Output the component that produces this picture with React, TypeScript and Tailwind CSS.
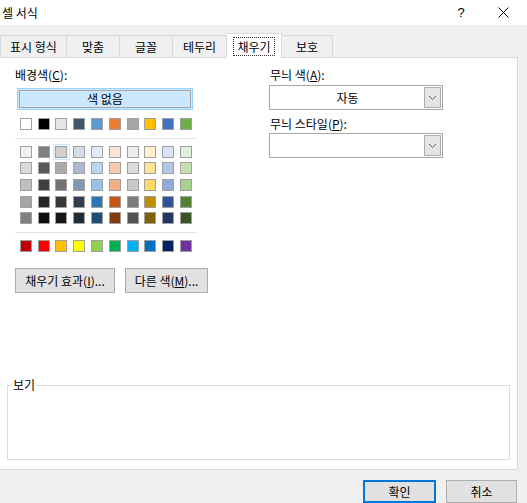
import React from "react";

const themeTop = ["#FFFFFF", "#000000", "#E7E6E6", "#44546A", "#5B9BD5", "#ED7D31", "#A5A5A5", "#FFC000", "#4472C4", "#70AD47"];
const themeRows = [
  ["#F2F2F2", "#7F7F7F", "#D0CECE", "#D6DCE5", "#DDEBF7", "#FCE4D6", "#EDEDED", "#FFF2CC", "#D9E1F2", "#E2EFDA"],
  ["#D9D9D9", "#595959", "#AEAAAA", "#ACB9CA", "#BDD7EE", "#F8CBAD", "#DBDBDB", "#FFE699", "#B4C6E7", "#C6E0B4"],
  ["#BFBFBF", "#404040", "#757171", "#8497B0", "#9BC2E6", "#F4B084", "#C9C9C9", "#FFD966", "#8EA9DB", "#A9D08E"],
  ["#A6A6A6", "#262626", "#3A3838", "#333F4F", "#2F75B5", "#C65911", "#7B7B7B", "#BF8F00", "#305496", "#548235"],
  ["#808080", "#0D0D0D", "#161616", "#222B35", "#1F4E78", "#833C0C", "#525252", "#806000", "#203764", "#375623"],
];
const standard = ["#C00000", "#FF0000", "#FFC000", "#FFFF00", "#92D050", "#00B050", "#00B0F0", "#0070C0", "#002060", "#7030A0"];

function SwatchRow({ colors, selected = -1 }: { colors: string[]; selected?: number }) {
  return (
    <div className="flex">
      {colors.map((c, i) => (
        <div
          key={i}
          className={
            "w-[17.8px] h-[16.6px] flex items-center justify-center border " +
            (i === selected ? "border-[#cce8ff] bg-[#eef7ff]" : "border-transparent")
          }
        >
          <div className="w-[12px] h-[12px] border border-[#a0a0a0]" style={{ backgroundColor: c }} />
        </div>
      ))}
    </div>
  );
}

function Chevron() {
  return (
    <svg width="9" height="6" viewBox="0 0 9 6">
      <path d="M1 1 L4.5 4.5 L8 1" fill="none" stroke="#606060" strokeWidth="1" />
    </svg>
  );
}

function Dropdown({ value }: { value?: string }) {
  return (
    <div className="w-[174px] h-[25px] border border-[#a6a6a6] bg-white flex p-[1px]">
      <div className="flex-1 flex items-center justify-center leading-[16px]">{value}</div>
      <div className="w-[17px] border border-[#adadad] bg-[#e5e5e5] flex items-center justify-center">
        <Chevron />
      </div>
    </div>
  );
}

export default function App() {
  const tabs = [
    { label: "표시 형식", w: "w-[67px]" },
    { label: "맞춤", w: "w-[53px]" },
    { label: "글꼴", w: "w-[53px]" },
    { label: "테두리", w: "w-[54px]" },
  ];
  return (
    <div className="w-[527px] h-[503px] bg-[#f0f0f0] overflow-hidden text-[12px] text-black font-['Noto_Sans_CJK_KR','Liberation_Sans',sans-serif] leading-[16px]">
      {/* Title bar */}
      <div className="h-[25px] bg-white flex items-center">
        <div className="pl-[2px] flex-1">셀 서식</div>
        <div className="w-[20px] text-center mr-[22px] font-['Liberation_Sans',sans-serif] text-[13px]">?</div>
        <div className="w-[20px] mr-[14px] flex justify-center">
          <svg width="11" height="11" viewBox="0 0 11 11">
            <path d="M0.5 0.5 L10.5 10.5 M10.5 0.5 L0.5 10.5" stroke="#000" strokeWidth="1" />
          </svg>
        </div>
      </div>

      {/* Tabs */}
      <div className="mt-[8px] h-[24px] flex items-end relative z-10">
        {tabs.map((t, i) => (
          <div
            key={t.label}
            className={
              t.w +
              " h-[22px] border-t border-r border-[#d9d9d9] bg-[#f0f0f0] flex items-center justify-center " +
              (i === 0 ? "border-l" : "")
            }
          >
            {t.label}
          </div>
        ))}
        <div className="w-[55px] h-[25px] mb-[-1px] bg-white border-t border-r border-[#d9d9d9] flex items-start justify-center pt-[3px]">
          <div className="border border-dotted border-[#303030] px-[3px] h-[19px] flex items-center">채우기</div>
        </div>
        <div className="w-[51px] h-[22px] border-t border-r border-[#d9d9d9] bg-[#f0f0f0] flex items-center justify-center">
          보호
        </div>
      </div>

      {/* Panel */}
      <div className="w-[518px] h-[413px] bg-white border-t border-r border-b border-[#d9d9d9]">
        <div className="flex">
          {/* Left column */}
          <div className="ml-[15px] w-[184px] shrink-0">
            <div className="mt-[9px] h-[16px]">
              배경색(<span className="underline">C</span>):
            </div>
            <div className="mt-[5px] ml-[2px] w-[176px] h-[22px] border border-[#99d1ff] bg-[#cce8ff] p-[1px]">
              <div className="w-full h-full border border-[#a6a6a6] flex items-center justify-center">색 없음</div>
            </div>
            <div className="mt-[6px] ml-[2px]">
              <SwatchRow colors={themeTop} />
            </div>
            <div className="mt-[5px] w-[182px] h-px bg-[#e3e3e3]" />
            <div className="mt-[5px] ml-[2px]">
              {themeRows.map((r, i) => (
                <SwatchRow key={i} colors={r} selected={i === 0 ? 2 : -1} />
              ))}
            </div>
            <div className="mt-[5px] w-[182px] h-px bg-[#e3e3e3]" />
            <div className="mt-[5px] ml-[2px]">
              <SwatchRow colors={standard} />
            </div>
            <div className="mt-[14px] flex gap-[10px] w-[200px]">
              <div className="w-[100px] h-[25px] shrink-0 border border-[#adadad] bg-[#e1e1e1] flex items-center justify-center">
                채우기 효과(<span className="underline">I</span>)...
              </div>
              <div className="w-[83px] h-[25px] shrink-0 border border-[#adadad] bg-[#e1e1e1] flex items-center justify-center">
                다른 색(<span className="underline">M</span>)...
              </div>
            </div>
          </div>

          {/* Right column */}
          <div className="ml-[70px]">
            <div className="mt-[9px] h-[16px] pl-[1px]">
              무늬 색(<span className="underline">A</span>):
            </div>
            <div className="mt-[2px]">
              <Dropdown value="자동" />
            </div>
            <div className="mt-[6px] h-[16px] pl-[1px]">
              무늬 스타일(<span className="underline">P</span>):
            </div>
            <div className="mt-[1px]">
              <Dropdown />
            </div>
          </div>
        </div>

        {/* Preview group */}
        <div className="mt-[92px] ml-[7px] w-[503px] h-[75px] border border-[#dcdcdc] relative">
          <div className="absolute top-[-9px] left-[4px] bg-white px-[1px] leading-[16px]">보기</div>
        </div>
      </div>

      {/* Bottom buttons */}
      <div className="mt-[10px] flex justify-end gap-[10px] pr-[10px]">
        <div className="w-[73px] h-[23px] border-2 border-[#0078d7] bg-[#e1e1e1] flex items-center justify-center">확인</div>
        <div className="w-[71px] h-[23px] border border-[#adadad] bg-[#e1e1e1] flex items-center justify-center">취소</div>
      </div>
    </div>
  );
}
